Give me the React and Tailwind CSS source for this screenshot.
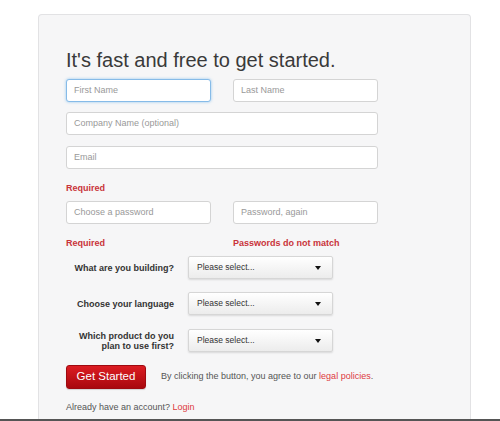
import React from 'react'

const font = { fontFamily: '"Liberation Sans", Arial, Helvetica, sans-serif' }

function TextInput({ placeholder, width = 'w-[145px]', focused = false }) {
  return (
    <div
      className={`${width} h-[23px] flex items-center px-[7px] bg-white rounded-[3px] border text-[9px] text-[#999] ${
        focused
          ? 'border-[#86bbe8] shadow-[0_0_3px_rgba(82,168,236,0.6)]'
          : 'border-[#d4d4d4]'
      }`}
    >
      {placeholder}
    </div>
  )
}

function Select() {
  return (
    <div className="w-[145px] h-[23px] flex items-center justify-between pl-[8px] pr-[11px] rounded-[2px] border border-[#d6d6d6] bg-gradient-to-b from-white to-[#ececec] shadow-[0_1px_2px_rgba(0,0,0,0.12)] text-[8.5px] text-[#333]">
      <span>Please select...</span>
      <span className="w-0 h-0 border-l-[3px] border-r-[3px] border-t-[4px] border-l-transparent border-r-transparent border-t-[#111]" />
    </div>
  )
}

function SelectRow({ label, className }) {
  return (
    <div className={`flex items-center ${className}`}>
      <div className="w-[108px] text-right text-[9px] font-bold leading-[10px] text-[#333]">{label}</div>
      <div className="ml-[14px]">
        <Select />
      </div>
    </div>
  )
}

export default function App() {
  return (
    <div className="w-[500px] h-[421px] overflow-hidden bg-white flex flex-col" style={font}>
      <div className="ml-[38px] mt-[14px] w-[433px] flex-1 bg-[#f6f6f7] border border-b-0 border-[#e2e2e4] rounded-t-[4px] pt-[33px] pl-[27px]">
        <h1 className="text-[20px] leading-[24px] text-[#3a3a3a] font-normal">
          It's fast and free to get started.
        </h1>

        <div className="flex gap-[22px] mt-[7px]">
          <TextInput placeholder="First Name" focused />
          <TextInput placeholder="Last Name" />
        </div>

        <div className="mt-[10px]">
          <TextInput placeholder="Company Name (optional)" width="w-[312px]" />
        </div>

        <div className="mt-[11px]">
          <TextInput placeholder="Email" width="w-[312px]" />
        </div>

        <div className="mt-[13px] text-[9px] leading-[12px] font-bold text-[#c9333a]">Required</div>

        <div className="flex gap-[22px] mt-[7px]">
          <TextInput placeholder="Choose a password" />
          <TextInput placeholder="Password, again" />
        </div>

        <div className="flex mt-[13px] text-[9px] leading-[12px] font-bold text-[#c9333a]">
          <div className="w-[167px]">Required</div>
          <div>Passwords do not match</div>
        </div>

        <SelectRow label="What are you building?" className="mt-[7px]" />
        <SelectRow label="Choose your language" className="mt-[13px]" />
        <SelectRow
          label={
            <>
              Which product do you
              <br />
              plan to use first?
            </>
          }
          className="mt-[14px]"
        />

        <div className="flex items-center mt-[13px]">
          <button className="w-[80px] h-[24px] rounded-[3px] border border-[#9e0a10] bg-gradient-to-b from-[#dc1c22] to-[#a9080e] text-white text-[11.5px] shadow-[0_1px_1px_rgba(0,0,0,0.15)]">
            Get Started
          </button>
          <p className="ml-[15px] text-[9px] text-[#555]">
            By clicking the button, you agree to our{' '}
            <a className="text-[#dd3a40]">legal policies</a>.
          </p>
        </div>

        <p className="mt-[12px] text-[9px] leading-[12px] text-[#555]">
          Already have an account? <a className="text-[#dd3a40]">Login</a>
        </p>
      </div>
      <div className="h-[2px] bg-[#555]" />
    </div>
  )
}
